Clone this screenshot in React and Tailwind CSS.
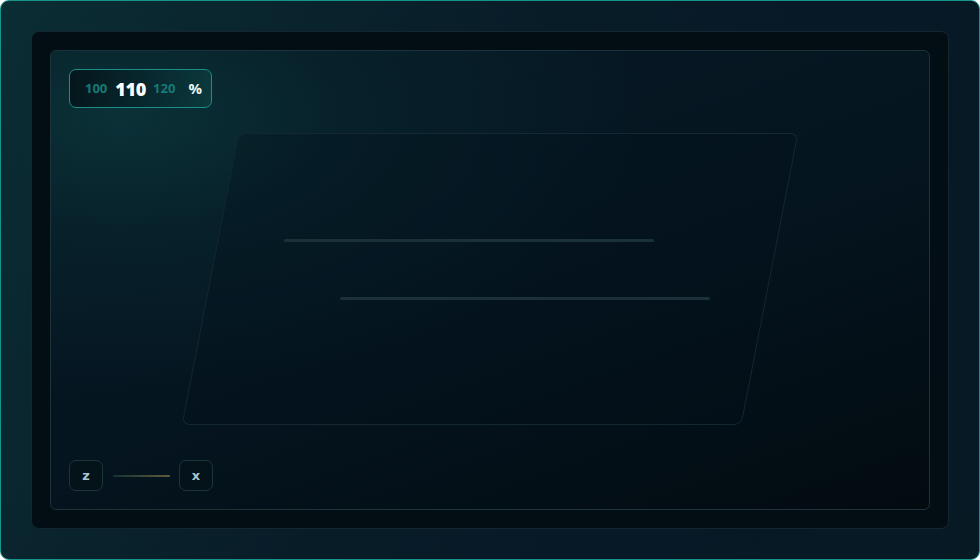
export default function App() {
  return (
    <div
      className="w-[980px] h-[560px] p-[30px] rounded-[9px] border border-[#139589] bg-[linear-gradient(115deg,#0b2d34_0%,#081c28_45%,#071826_75%,#071a24_100%)]"
      style={{ fontFamily: '"Open Sans", "Noto Sans", sans-serif' }}
    >
      <div className="h-full w-full p-[18px] rounded-[8px] border border-[#14262e] bg-[#030e14]">
        <div className="relative h-full w-full p-[18px] rounded-[6px] border border-[#1c333a] bg-[radial-gradient(ellipse_60%_60%_at_8%_14%,#0b3137_0%,#07202a_45%,transparent_100%),linear-gradient(160deg,#071a26_0%,#051520_50%,#020b10_100%)] flex flex-col">
          <div className="self-start h-[39px] w-[143px] rounded-[7px] border border-[#1b8f87] bg-[linear-gradient(100deg,#04161c_0%,#082a30_60%,#0b3a3c_100%)] flex items-center pl-[15px]">
            <span className="text-[13px] font-bold text-[#187a76] leading-none">100</span>
            <span className="ml-[8px] text-[18px] font-extrabold text-white leading-none tracking-[-0.3px]">110</span>
            <span className="ml-[7px] text-[13px] font-bold text-[#187a76] leading-none">120</span>
            <span className="ml-[13px] text-[15px] font-bold text-[#e6f6f4] leading-none">%</span>
          </div>

          <div className="flex-1 flex items-center justify-center">
            <div className="relative w-[560px] h-[292px] mb-[11px]">
              <div className="absolute inset-0 rounded-[8px] border border-[#142831] bg-[#041119]/30 skew-x-[-11deg]" />
              <div className="relative pt-[106px] flex flex-col">
                <div className="ml-[74px] w-[370px] h-[3px] rounded-full bg-[#1b3139]" />
                <div className="ml-[130px] mt-[55px] w-[370px] h-[3px] rounded-full bg-[#1b3139]" />
              </div>
            </div>
          </div>

          <div className="flex items-center">
            <div
              className="w-[34px] h-[31px] rounded-[7px] border border-[#1c353d] bg-[#04121a] flex items-center justify-center text-[13px] font-bold text-[#a9c6ce] leading-none"
              style={{ fontFamily: '"DejaVu Sans", Verdana, sans-serif' }}
            >
              z
            </div>
            <div className="ml-[10px] w-[57px] h-[2px] rounded-full bg-[linear-gradient(90deg,#163234,#605a3c)]" />
            <div
              className="ml-[9px] w-[34px] h-[31px] rounded-[7px] border border-[#1c353d] bg-[#04121a] flex items-center justify-center text-[13px] font-bold text-[#a9c6ce] leading-none"
              style={{ fontFamily: '"DejaVu Sans", Verdana, sans-serif' }}
            >
              x
            </div>
          </div>
        </div>
      </div>
    </div>
  );
}
